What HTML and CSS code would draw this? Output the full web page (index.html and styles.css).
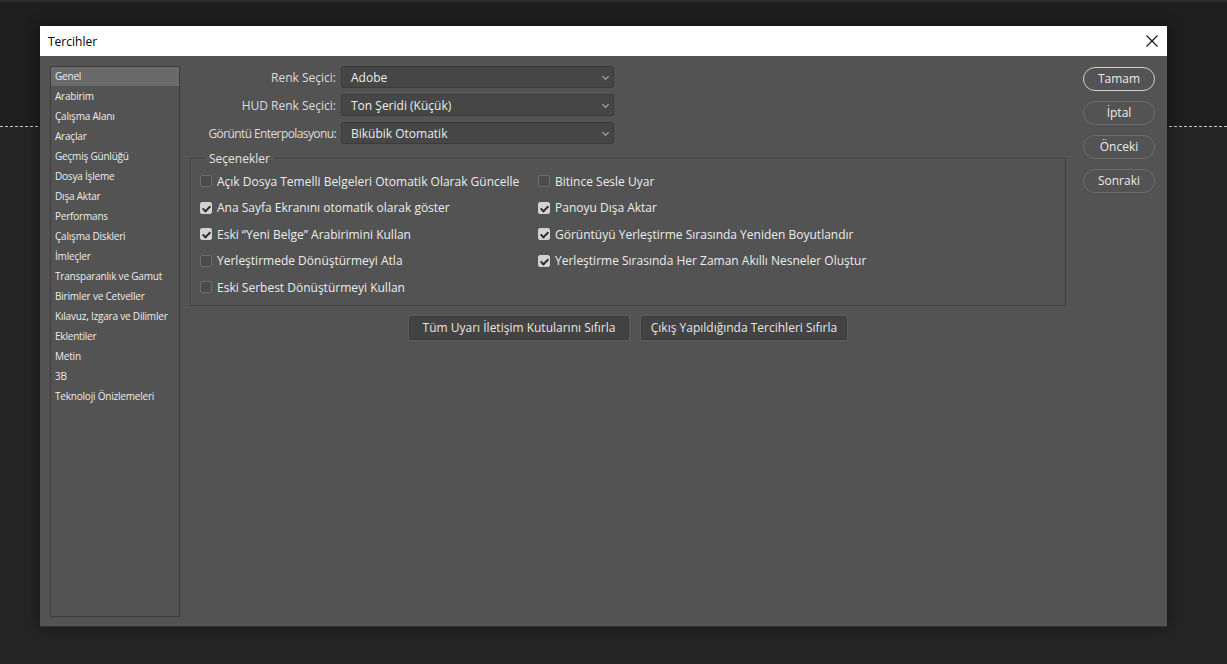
FILE: index.html
```html
<!DOCTYPE html>
<html lang="tr">
<head>
    <meta charset="UTF-8">
    <title>Tercihler</title>
    <link rel="stylesheet" href="styles.css">
</head>
<body>
    <div class="guide-line"></div>
    <div class="dialog">
        <div class="title-bar">
            <span class="title">Tercihler</span>
            <svg class="close" width="12" height="12" viewBox="0 0 12 12">
                <path d="M0.5 0.5 L11.5 11.5 M11.5 0.5 L0.5 11.5" stroke="#111" stroke-width="1.1" fill="none"/>
            </svg>
        </div>
        <div class="dialog-body">
            <!-- sol menü -->
            <ul class="side-list">
                <li class="active">Genel</li>
                <li>Arabirim</li>
                <li>Çalışma Alanı</li>
                <li>Araçlar</li>
                <li>Geçmiş Günlüğü</li>
                <li>Dosya İşleme</li>
                <li>Dışa Aktar</li>
                <li>Performans</li>
                <li>Çalışma Diskleri</li>
                <li>İmleçler</li>
                <li>Transparanlık ve Gamut</li>
                <li>Birimler ve Cetveller</li>
                <li>Kılavuz, Izgara ve Dilimler</li>
                <li>Eklentiler</li>
                <li>Metin</li>
                <li>3B</li>
                <li>Teknoloji Önizlemeleri</li>
            </ul>

            <div class="main">
                <div class="form-row">
                    <label class="form-label">Renk Seçici:</label>
                    <div class="select"><span>Adobe</span><i class="chevron"></i></div>
                </div>
                <div class="form-row">
                    <label class="form-label">HUD Renk Seçici:</label>
                    <div class="select"><span>Ton Şeridi (Küçük)</span><i class="chevron"></i></div>
                </div>
                <div class="form-row">
                    <label class="form-label tight">Görüntü Enterpolasyonu:</label>
                    <div class="select"><span>Bikübik Otomatik</span><i class="chevron"></i></div>
                </div>

                <fieldset class="options">
                    <legend>Seçenekler</legend>
                    <div class="opt-cols">
                        <div class="opt-col first">
                            <div class="check"><span class="box"></span>Açık Dosya Temelli Belgeleri Otomatik Olarak Güncelle</div>
                            <div class="check on"><span class="box"></span>Ana Sayfa Ekranını otomatik olarak göster</div>
                            <div class="check on"><span class="box"></span>Eski “Yeni Belge” Arabirimini Kullan</div>
                            <div class="check"><span class="box"></span>Yerleştirmede Dönüştürmeyi Atla</div>
                            <div class="check"><span class="box"></span>Eski Serbest Dönüştürmeyi Kullan</div>
                        </div>
                        <div class="opt-col">
                            <div class="check"><span class="box"></span>Bitince Sesle Uyar</div>
                            <div class="check on"><span class="box"></span>Panoyu Dışa Aktar</div>
                            <div class="check on"><span class="box"></span>Görüntüyü Yerleştirme Sırasında Yeniden Boyutlandır</div>
                            <div class="check on"><span class="box"></span>Yerleştirme Sırasında Her Zaman Akıllı Nesneler Oluştur</div>
                        </div>
                    </div>
                </fieldset>

                <div class="reset-row">
                    <div class="flat-btn wide">Tüm Uyarı İletişim Kutularını Sıfırla</div>
                    <div class="flat-btn">Çıkış Yapıldığında Tercihleri Sıfırla</div>
                </div>
            </div>

            <!-- sağ butonlar -->
            <div class="actions">
                <div class="pill default">Tamam</div>
                <div class="pill">İptal</div>
                <div class="pill">Önceki</div>
                <div class="pill">Sonraki</div>
            </div>
        </div>
    </div>
</body>
</html>
```

FILE: styles.css
```css
*{
    margin: 0;
    padding: 0;
    box-sizing: border-box;
}
body{
    width: 1227px;
    height: 664px;
    overflow: hidden;
    position: relative;
    font-family: "Open Sans", "Noto Sans", sans-serif;
    background: linear-gradient(#2b2b2b 0, #2b2b2b 2px, #1e1e1e 2px, #1e1e1e 127px, #252525 127px);
    padding-top: 26px;
    padding-left: 40px;
}
/* arka plandaki kesikli çizgi */
.guide-line{
    position: absolute;
    left: 0;
    right: 0;
    top: 126px;
    border-top: 1px dashed #c8c8c8;
}
.dialog{
    position: relative;
    width: 1127px;
    height: 601px;
    background: #535353;
    box-shadow: 0 0 14px rgba(0,0,0,0.45);
    border-bottom: 1px solid #343434;
    display: flex;
    flex-direction: column;
}
.title-bar{
    height: 30px;
    background: #fff;
    display: flex;
    align-items: center;
    justify-content: space-between;
    padding: 0 9px 0 8px;
}
.title{
    font-size: 12px;
    color: #000;
}
.close{
    display: block;
    margin-top: -1px;
}
.dialog-body{
    flex: 1;
    display: flex;
    padding: 10px 12px 9px 10px;
    color: #e3e3e3;
}
.side-list{
    list-style: none;
    width: 130px;
    border: 1px solid #3d3d3d;
}
.side-list li{
    height: 20px;
    line-height: 19px;
    padding-left: 4px;
    font-size: 10px;
    letter-spacing: -0.2px;
    color: #ececec;
}
.side-list li.active{
    background: #6a6a6a;
    height: 19px;
    line-height: 18px;
    margin-bottom: 1px;
}
.main{
    width: 876px;
    margin-left: 10px;
}
.form-row{
    display: flex;
    align-items: center;
    height: 22px;
    margin-bottom: 6px;
}
.form-label{
    width: 146px;
    text-align: right;
    font-size: 12px;
    color: #dcdcdc;
    margin-right: 5px;
    white-space: nowrap;
}
.form-label.tight{
    letter-spacing: -0.6px;
}
.select{
    width: 273px;
    height: 22px;
    background: #464646;
    border: 1px solid #3b3b3b;
    border-radius: 2px;
    display: flex;
    align-items: center;
    justify-content: space-between;
    padding: 0 5px 0 9px;
    font-size: 12px;
    color: #ececec;
}
.chevron{
    width: 5px;
    height: 5px;
    border-right: 1px solid #b0b0b0;
    border-bottom: 1px solid #b0b0b0;
    transform: rotate(45deg);
    margin-top: -2px;
}
.options{
    border: 1px solid #404040;
    box-shadow: inset 1px 1px 0 #5c5c5c;
    margin-top: 4px;
    height: 156px;
    padding: 1px 0 0 9px;
}
.options legend{
    margin-left: 5px;
    padding: 0 4px;
    font-size: 12px;
    color: #e3e3e3;
}
.opt-cols{
    display: flex;
}
.opt-col.first{
    width: 338px;
}
.check{
    display: flex;
    align-items: center;
    height: 26.5px;
    font-size: 12px;
    color: #ececec;
    white-space: nowrap;
}
.box{
    width: 12px;
    height: 12px;
    border: 1px solid #6c6c6c;
    background: #4b4b4b;
    border-radius: 2px;
    margin-right: 5px;
    position: relative;
}
.check.on .box{
    background: #d2d2d2;
    border-color: #d2d2d2;
}
.check.on .box::after{
    content: "";
    position: absolute;
    left: 3px;
    top: 1px;
    width: 3px;
    height: 6px;
    border-right: 2px solid #2c2c2c;
    border-bottom: 2px solid #2c2c2c;
    transform: rotate(45deg);
}
.reset-row{
    display: flex;
    justify-content: center;
    gap: 12px;
    margin-top: 10px;
}
.flat-btn{
    width: 206px;
    height: 24px;
    line-height: 22px;
    text-align: center;
    background: #434343;
    border: 1px solid #3a3a3a;
    box-shadow: 0 0 0 1px #5d5d5d;
    border-radius: 2px;
    font-size: 12px;
    color: #e6e6e6;
    white-space: nowrap;
}
.flat-btn.wide{
    width: 220px;
}
.actions{
    margin-left: 17px;
    width: 72px;
    display: flex;
    flex-direction: column;
    gap: 10px;
    padding-top: 1px;
}
.pill{
    height: 24px;
    line-height: 22px;
    border: 1px solid #6c6c6c;
    border-radius: 12px;
    text-align: center;
    font-size: 12px;
    color: #eaeaea;
}
.pill.default{
    border: 1.5px solid #cfcfcf;
}
```
